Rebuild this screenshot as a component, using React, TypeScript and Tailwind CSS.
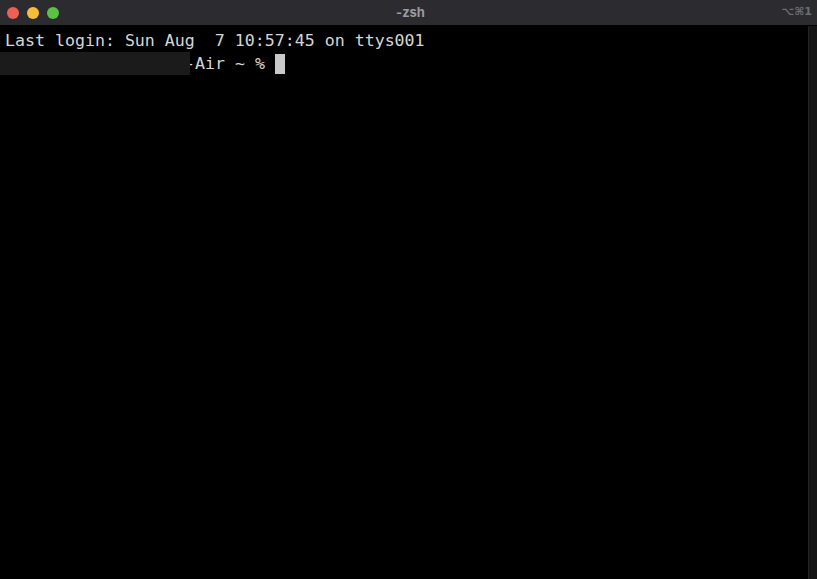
import React from "react";

export default function App() {
  const mono = { fontFamily: '"DejaVu Sans Mono", "Liberation Mono", monospace' };
  return (
    <div className="w-[817px] h-[579px] flex flex-col bg-black overflow-hidden">
      <div className="h-[26px] shrink-0 grid grid-cols-[1fr_auto_1fr] items-center bg-[#2c2b30] border-b border-black">
        <div className="flex items-center gap-[8px] pl-[7px]">
          <div className="w-[12px] h-[12px] rounded-full bg-[#ee5f58]" />
          <div className="w-[12px] h-[12px] rounded-full bg-[#f5bd3a]" />
          <div className="w-[12px] h-[12px] rounded-full bg-[#5ac146]" />
        </div>
        <div
          className="text-center text-[13px] font-bold text-[#9b9a9f] pl-[4px]"
          style={{ fontFamily: '"Inter", "Liberation Sans", sans-serif' }}
        >
          -zsh
        </div>
        <div
          className="text-right pr-[5px] text-[11px] font-semibold text-[#6d6c72]"
          style={{ fontFamily: '"DejaVu Sans", "Liberation Sans", sans-serif' }}
        >
          ⌥⌘1
        </div>
      </div>
      <div className="flex-1 flex flex-row min-h-0">
        <div
          className="flex-1 bg-black pt-[3px] pl-[5px] text-[16.6px] leading-[23px] text-[#d6d6d6] whitespace-pre"
          style={mono}
        >
          <div>Last login: Sun Aug  7 10:57:45 on ttys001</div>
          <div className="relative flex items-center h-[23px]">
            <span className="pl-[180px]">-Air ~ % </span>
            <span className="inline-block w-[10px] h-[20px] bg-[#c9c9c9]" />
            <div className="absolute left-[-5px] top-0 w-[190px] h-[23px] bg-[#1b1b1b]" />
          </div>
        </div>
        <div className="w-[9px] shrink-0 bg-[#151515] border-l border-[#232323]" />
      </div>
    </div>
  );
}
